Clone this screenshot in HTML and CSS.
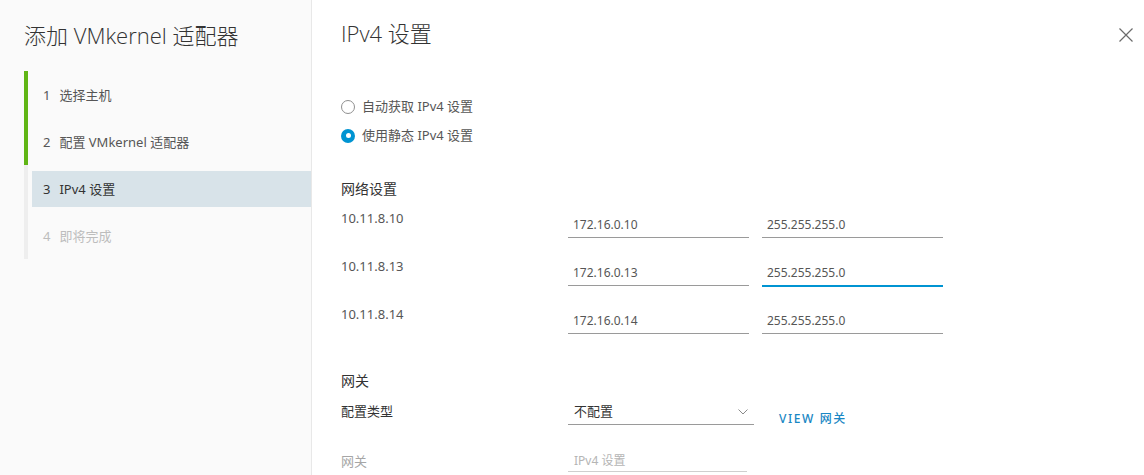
FILE: index.html
```html
<!DOCTYPE html>
<html lang="zh-CN">
<head>
<meta charset="utf-8">
<title>添加 VMkernel 适配器</title>
<link rel="stylesheet" href="styles.css">
</head>
<body>
<div class="wizard">
  <aside class="sidebar">
    <h1 class="wizard-title">添加 VMkernel 适配器</h1>
    <ol class="steps">
      <li class="step done"><div class="step-inner"><span class="num">1</span>选择主机</div></li>
      <li class="step done"><div class="step-inner"><span class="num">2</span>配置 VMkernel 适配器</div></li>
      <li class="step current"><div class="step-inner"><span class="num">3</span>IPv4 设置</div></li>
      <li class="step todo"><div class="step-inner"><span class="num">4</span>即将完成</div></li>
    </ol>
  </aside>
  <main class="content">
    <h2 class="page-title">IPv4 设置</h2>
    <button class="close" aria-label="关闭">
      <svg width="14" height="14" viewBox="0 0 14 14"><path d="M0.5 0.5 L13.5 13.5 M13.5 0.5 L0.5 13.5" stroke="#6b6b6b" stroke-width="1.2" fill="none"/></svg>
    </button>
    <div class="radios">
      <label class="radio"><span class="dot"></span>自动获取 IPv4 设置</label>
      <label class="radio"><span class="dot checked"></span>使用静态 IPv4 设置</label>
    </div>
    <h3 class="section">网络设置</h3>
    <div class="ip-row">
      <div class="host">10.11.8.10</div>
      <div class="field">172.16.0.10</div>
      <div class="field">255.255.255.0</div>
    </div>
    <div class="ip-row">
      <div class="host">10.11.8.13</div>
      <div class="field">172.16.0.13</div>
      <div class="field focus">255.255.255.0</div>
    </div>
    <div class="ip-row">
      <div class="host">10.11.8.14</div>
      <div class="field">172.16.0.14</div>
      <div class="field">255.255.255.0</div>
    </div>
    <h3 class="section gw">网关</h3>
    <div class="gw-row">
      <div class="host dark">配置类型</div>
      <div class="select">不配置
        <svg class="chev" width="10" height="6" viewBox="0 0 10 6"><path d="M0.5 0.5 L5 5 L9.5 0.5" stroke="#8a8a8a" stroke-width="1" fill="none"/></svg>
      </div>
      <a class="view-link">VIEW 网关</a>
    </div>
    <div class="gw-row2">
      <div class="host muted">网关</div>
      <div class="field placeholder">IPv4 设置</div>
    </div>
  </main>
</div>
</body>
</html>
```
FILE: styles.css
```css
html, body {
  margin: 0;
  padding: 0;
  background: #fff;
  font-family: "Noto Sans", "Noto Sans CJK SC", sans-serif;
  color: #565656;
}
.wizard {
  display: flex;
  width: 1144px;
  height: 475px;
  overflow: hidden;
}
.sidebar {
  width: 311px;
  flex: none;
  background: #fafafa;
  border-right: 1px solid #e8e8e8;
}
.wizard-title {
  margin: 22px 0 0 24px;
  font-family: "Open Sans", "Noto Sans CJK SC", sans-serif;
  font-size: 22px;
  line-height: 26px;
  font-weight: 300;
  color: #333;
}
.steps {
  list-style: none;
  margin: 23px 0 0 24px;
  padding: 0;
}
.step {
  height: 47px;
  padding: 6px 0 5px 4px;
  border-left: 4px solid #eeeeee;
  box-sizing: border-box;
}
.step.done { border-left-color: #60b515; }
.step-inner {
  height: 36px;
  line-height: 36px;
  padding-left: 11px;
  font-size: 13px;
  color: #565656;
}
.num { margin-right: 9px; }
.step.current .step-inner { background: #d8e3e9; color: #333; }
.step.todo .step-inner { color: #bdbdbd; }

.content {
  flex: 1;
  position: relative;
  padding-left: 29px;
}
.page-title {
  margin: 21px 0 0;
  font-family: "Open Sans", "Noto Sans CJK SC", sans-serif;
  font-size: 22px;
  line-height: 24px;
  font-weight: 300;
  color: #333;
}
.close {
  position: absolute;
  top: 28px;
  right: 11px;
  border: 0;
  padding: 0;
  background: none;
  width: 14px;
  height: 14px;
  display: block;
}
.close svg { display: block; }
.radios {
  margin-top: 47px;
}
.radio {
  display: flex;
  align-items: center;
  height: 29px;
  font-size: 13px;
  line-height: 29px;
  color: #565656;
}
.dot {
  width: 14px;
  height: 14px;
  box-sizing: border-box;
  border: 1px solid #8f8f8f;
  border-radius: 50%;
  margin-right: 7px;
  position: relative;
  flex: none;
}
.dot.checked {
  border: 0;
  background: #0094d2;
}
.dot.checked::after {
  content: "";
  position: absolute;
  left: 4.5px;
  top: 4.5px;
  width: 5px;
  height: 5px;
  border-radius: 50%;
  background: #fff;
}
.section {
  margin: 29px 0 0;
  font-size: 14px;
  line-height: 20px;
  font-weight: 400;
  color: #333;
}
.section.gw { margin-top: 19px; }
.ip-row {
  display: flex;
  align-items: flex-start;
  height: 48px;
}
.section + .ip-row { margin-top: 9px; }
.host {
  width: 227px;
  flex: none;
  font-size: 13px;
  line-height: 20px;
  color: #565656;
}
.host.dark { color: #333; }
.host.muted { color: #a6a6a6; }
.field {
  width: 181px;
  height: 26px;
  box-sizing: border-box;
  margin-top: 4px;
  margin-right: 13px;
  padding-left: 5px;
  line-height: 25px;
  font-size: 12px;
  color: #565656;
  border-bottom: 1px solid #9a9a9a;
}
.field.focus {
  border-bottom-color: #0094d2;
  box-shadow: 0 1px 0 #0094d2;
}
.gw-row {
  display: flex;
  align-items: flex-start;
  margin-top: 10px;
  height: 50px;
}
.select {
  width: 186px;
  height: 26px;
  box-sizing: border-box;
  margin-top: -2px;
  padding-left: 6px;
  line-height: 25px;
  font-size: 13px;
  color: #333;
  border-bottom: 1px solid #9a9a9a;
  position: relative;
}
.chev {
  position: absolute;
  right: 6px;
  top: 10px;
}
.view-link {
  margin-left: 25px;
  margin-top: 9px;
  font-size: 12px;
  line-height: 18px;
  font-weight: 500;
  letter-spacing: 1.6px;
  color: #1a87c4;
}
.gw-row2 {
  display: flex;
  align-items: flex-start;
}
.field.placeholder {
  margin-top: -2px;
  padding-left: 6px;
  height: 23px;
  line-height: 23px;
  color: #b5b5b5;
  font-size: 12px;
  width: 179px;
  border-bottom-color: #cfcfcf;
}
```
